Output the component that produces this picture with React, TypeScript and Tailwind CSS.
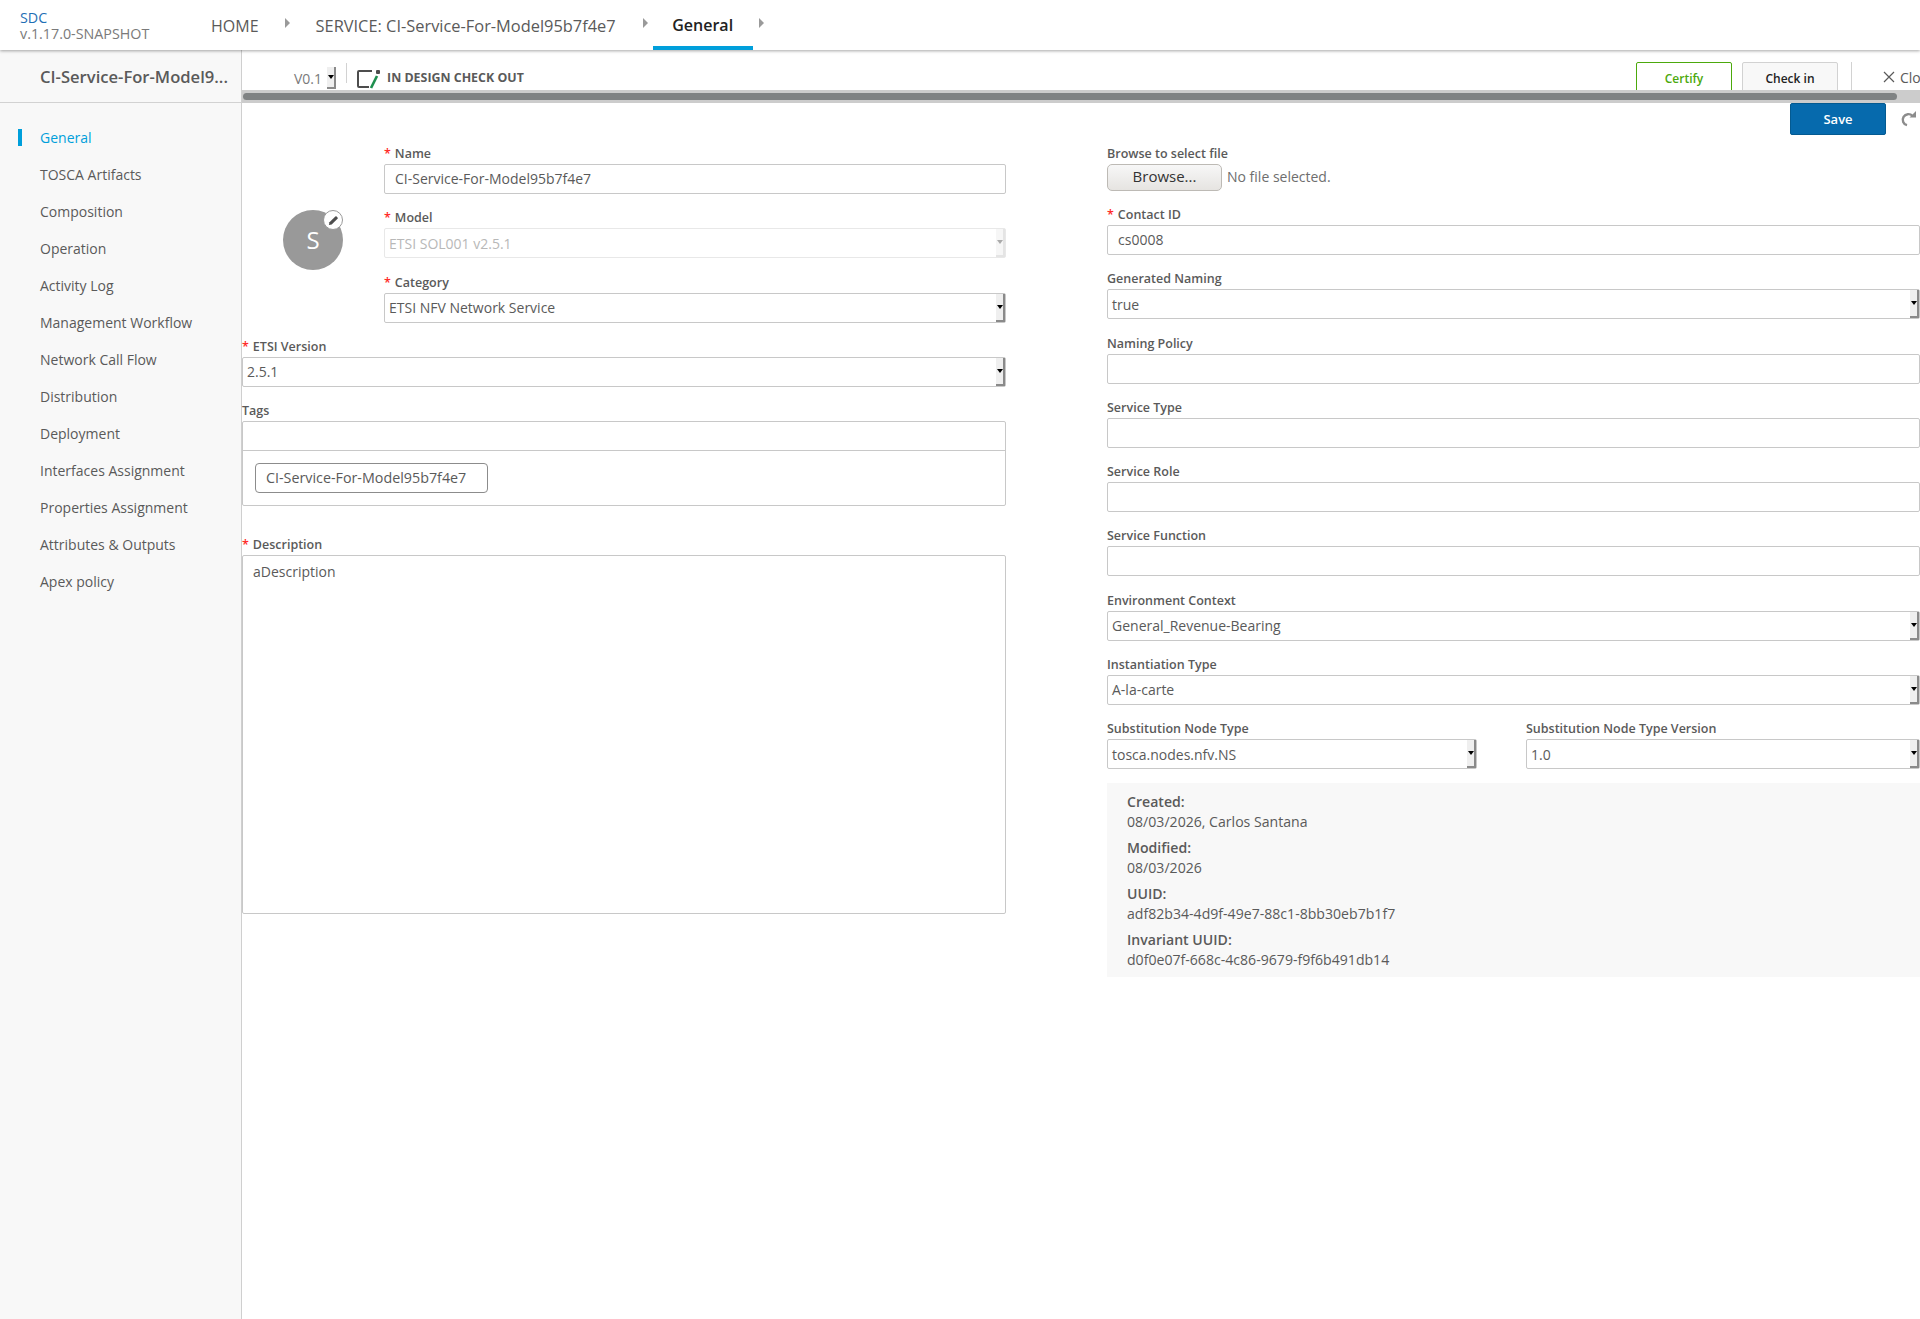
const navItems = [
  "General",
  "TOSCA Artifacts",
  "Composition",
  "Operation",
  "Activity Log",
  "Management Workflow",
  "Network Call Flow",
  "Distribution",
  "Deployment",
  "Interfaces Assignment",
  "Properties Assignment",
  "Attributes & Outputs",
  "Apex policy",
];

const rightFields = [
  { label: "Contact ID", value: "cs0008", required: true },
  { label: "Generated Naming", value: "true", select: true },
  { label: "Naming Policy", value: "" },
  { label: "Service Type", value: "" },
  { label: "Service Role", value: "" },
  { label: "Service Function", value: "" },
  { label: "Environment Context", value: "General_Revenue-Bearing", select: true },
  { label: "Instantiation Type", value: "A-la-carte", select: true },
];

const infoRows = [
  { label: "Created:", value: "08/03/2026, Carlos Santana" },
  { label: "Modified:", value: "08/03/2026" },
  { label: "UUID:", value: "adf82b34-4d9f-49e7-88c1-8bb30eb7b1f7" },
  { label: "Invariant UUID:", value: "d0f0e07f-668c-4c86-9679-f9f6b491db14" },
];

function Chevron() {
  return <span className="mb-[4px] h-0 w-0 border-y-[5px] border-l-[5px] border-y-transparent border-l-[#9a9a9a]" />;
}

function SelectArrow({ disabled }: { disabled?: boolean }) {
  return (
    <span
      className={`flex w-[9px] shrink-0 items-center justify-center self-stretch border-b-2 border-r-2 ${
        disabled ? "border-[#e4e4e4] bg-[#f6f6f6]" : "border-[#8a8a8a] bg-[#efefef]"
      }`}
    >
      <span
        className={`h-0 w-0 border-x-[3px] border-t-[4px] border-x-transparent ${
          disabled ? "border-t-[#aaaaaa]" : "border-t-black"
        }`}
      />
    </span>
  );
}

function Label({ text, required }: { text: string; required?: boolean }) {
  return (
    <div className="flex h-[20px] items-center pt-[1px] text-[12.5px] font-semibold text-[#5a5a5a]">
      {required && <span className="mr-[4px] text-[#ff2a2a]">*</span>}
      {text}
    </div>
  );
}

function Field({
  label,
  value,
  required,
  select,
  disabled,
}: {
  label: string;
  value: string;
  required?: boolean;
  select?: boolean;
  disabled?: boolean;
}) {
  return (
    <div className="h-[64.25px]">
      <Label text={label} required={required} />
      <div
        className={`flex h-[30px] items-center rounded-[2px] border text-[14px] ${
          disabled ? "border-[#e8e8e8] text-[#b8b8b8]" : "border-[#c8c8c8] text-[#5a5a5a]"
        } ${select ? "pl-[4px]" : "pb-[1px] pl-[10px]"}`}
      >
        <span className="flex-1">{value}</span>
        {select && <SelectArrow disabled={disabled} />}
      </div>
    </div>
  );
}

function Sidebar() {
  return (
    <aside className="flex w-[242px] shrink-0 flex-col border-r border-[#cfcfcf] bg-[#f8f8f8]">
      <div className="flex h-[53px] shrink-0 items-center border-b border-[#d2d2d2] pl-[40px] pt-[2px] text-[16.6px] font-semibold text-[#5a5a5a]">
        CI-Service-For-Model9...
      </div>
      <nav className="flex flex-col pt-[16px]">
        {navItems.map((item, i) => (
          <div key={item} className="flex h-[37px] items-center text-[14px] text-[#5a5a5a]">
            <span className={`ml-[18px] h-[17px] w-[4px] ${i === 0 ? "bg-[#009fdb]" : ""}`} />
            <span className={`ml-[18px] ${i === 0 ? "text-[#009fdb]" : ""}`}>{item}</span>
          </div>
        ))}
      </nav>
    </aside>
  );
}

function Toolbar() {
  return (
    <div className="flex h-[40px] shrink-0 items-end overflow-hidden">
      <div className="mb-[-1px] ml-[52px] flex h-[26px] items-center text-[14px] text-[#7a7a7a]">
        V0.1
        <span className="ml-[5px] flex h-[22px]">
          <SelectArrow />
        </span>
      </div>
      <span className="mb-[7px] ml-[10px] h-[20px] w-px bg-[#d2d2d2]" />
      <svg className="mb-[1px] ml-[10px]" width="24" height="20" viewBox="0 0 24 20" fill="none">
        <path d="M15 2H2a1 1 0 0 0-1 1v14a1 1 0 0 0 1 1h10" stroke="#4d4d4d" strokeWidth="2" />
        <path d="M14 19L20 7" stroke="#1f8f4f" strokeWidth="2.6" />
        <rect x="19" y="1" width="4" height="4" rx="1" fill="#4d4d4d" />
      </svg>
      <span className="mb-[2px] ml-[6px] text-[12.4px] font-bold text-[#5a5a5a]">IN DESIGN CHECK OUT</span>
      <div className="ml-auto flex h-[28px] items-start">
        <span className="flex h-[30px] w-[96px] items-center justify-center rounded-[2px] border border-[#4ca90c] pt-[3px] text-[12px] font-semibold text-[#4ca90c]">
          Certify
        </span>
        <span className="ml-[10px] flex h-[30px] w-[96px] items-center justify-center rounded-[2px] border border-[#d2d2d2] bg-[#f8f8f8] pt-[3px] text-[12px] font-semibold text-[#222222]">
          Check in
        </span>
        <span className="ml-[13px] h-[30px] w-px bg-[#d2d2d2]" />
        <div className="ml-[31px] flex w-[37px] items-center overflow-hidden pt-[5px] text-[14px] text-[#5a5a5a]">
          <svg className="mb-[2px] shrink-0" width="12" height="12" viewBox="0 0 12 12" stroke="#5a5a5a" strokeWidth="1.2">
            <path d="M1 1l10 10M11 1L1 11" />
          </svg>
          <span className="ml-[5px]">Close</span>
        </div>
      </div>
    </div>
  );
}

function LeftColumn() {
  return (
    <div className="w-[764px] shrink-0">
      <div className="flex items-center">
        <div className="w-[142px] shrink-0 pl-[41px]">
          <div className="relative flex h-[60px] w-[60px] items-center justify-center rounded-full bg-[#999999] text-[24px] text-white">
            S
            <span className="absolute right-0 top-0 flex h-[20px] w-[20px] items-center justify-center rounded-full border border-[#999999] bg-white">
              <svg width="11" height="11" viewBox="0 0 12 12" fill="#4d4d4d">
                <path d="M1 11l.6-3L8 1.6a1 1 0 0 1 1.4 0l1 1a1 1 0 0 1 0 1.4L4 10.4z" />
              </svg>
            </span>
          </div>
        </div>
        <div className="flex-1">
          <Field label="Name" value="CI-Service-For-Model95b7f4e7" required />
          <Field label="Model" value="ETSI SOL001 v2.5.1" required select disabled />
          <Field label="Category" value="ETSI NFV Network Service" required select />
        </div>
      </div>
      <Field label="ETSI Version" value="2.5.1" required select />
      <Label text="Tags" />
      <div className="rounded-[2px] border border-[#c8c8c8]">
        <div className="h-[29px] border-b border-[#c8c8c8]" />
        <div className="flex h-[54px] items-center pl-[12px]">
          <span className="flex h-[30px] w-[233px] items-center rounded-[4px] border border-[#8c8c8c] pl-[10px] text-[14.3px] font-medium text-[#5a5a5a]">
            CI-Service-For-Model95b7f4e7
          </span>
        </div>
      </div>
      <div className="mt-[29px]">
        <Label text="Description" required />
        <div className="h-[359px] rounded-[2px] border border-[#c8c8c8] px-[10px] py-[5px] text-[14px] text-[#5a5a5a]">
          aDescription
        </div>
      </div>
    </div>
  );
}

function RightColumn() {
  return (
    <div className="ml-[101px] w-[813px] shrink-0">
      <Label text="Browse to select file" />
      <div className="mb-[15px] flex h-[26px] items-center">
        <span className="flex h-[27px] w-[115px] items-center justify-center rounded-[5px] border border-[#bdbab5] bg-gradient-to-b from-[#f7f7f7] to-[#e6e4e1] pb-[2px] text-[15px] text-[#333333]">
          Browse...
        </span>
        <span className="ml-[5px] pb-[2px] text-[14px] text-[#6e6e6e]">No file selected.</span>
      </div>
      {rightFields.map((f) => (
        <Field key={f.label} {...f} />
      ))}
      <div className="flex">
        <div className="w-[370px]">
          <Field label="Substitution Node Type" value="tosca.nodes.nfv.NS" select />
        </div>
        <div className="ml-[49px] flex-1">
          <Field label="Substitution Node Type Version" value="1.0" select />
        </div>
      </div>
      <div className="mt-[-19px] h-[194px] translate-y-[19px] bg-[#f8f8f8] pl-[20px] pt-[9px] text-[14.1px] text-[#5a5a5a]">
        {infoRows.map((r) => (
          <div key={r.label} className="h-[46px]">
            <div className="h-[20px] font-semibold leading-[20px]">{r.label}</div>
            <div className="leading-[20px]">{r.value}</div>
          </div>
        ))}
      </div>
    </div>
  );
}

export default function App() {
  return (
    <div className="flex h-[1319px] w-[1920px] flex-col overflow-hidden bg-white font-['Open_Sans',sans-serif]">
      <header className="relative z-10 flex h-[50px] shrink-0 items-center bg-white shadow-[0_1px_3px_rgba(0,0,0,0.35)]">
        <div className="ml-[20px] w-[191px] pt-[2px] text-[14.3px] leading-[16px]">
          <div className="text-[#1f6fb5]">SDC</div>
          <div className="text-[#7a7a7a]">v.1.17.0-SNAPSHOT</div>
        </div>
        <span className="pt-[2px] text-[16px] text-[#5a5a5a]">HOME</span>
        <span className="ml-[26px] flex"><Chevron /></span>
        <span className="ml-[26px] pt-[2px] text-[16.4px] text-[#5a5a5a]">SERVICE: CI-Service-For-Model95b7f4e7</span>
        <span className="ml-[27px] flex"><Chevron /></span>
        <div className="ml-[5px] flex h-[50px] w-[100px] items-center justify-center border-b-[4px] border-[#009fdb] pt-[4px] text-[16px] font-semibold text-[#222222]">
          General
        </div>
        <span className="ml-[6px] flex"><Chevron /></span>
      </header>
      <div className="flex min-h-0 flex-1">
        <Sidebar />
        <main className="flex min-w-0 flex-1 flex-col">
          <Toolbar />
          <div className="flex h-[13px] shrink-0 items-center bg-[#cccccc] pl-[1px] pr-[23px]">
            <div className="h-[7px] w-full rounded-full bg-[#7f8283]" />
          </div>
          <div className="flex h-[32px] shrink-0 items-start justify-end">
            <span className="flex h-[32px] w-[96px] items-center justify-center rounded-[2px] border border-[#045a91] bg-[#066aad] pt-[1px] text-[13px] font-semibold text-white">
              Save
            </span>
            <svg className="ml-[14px] mr-[3px] mt-[8px]" width="17" height="16" viewBox="0 0 17 16" fill="none">
              <path d="M12.5 5A5.6 5.6 0 1 0 7 14.2" stroke="#8c8c8c" strokeWidth="2.4" />
              <path d="M9.5 6.5H16V0z" fill="#8c8c8c" />
            </svg>
          </div>
          <div className="flex pt-[9px]">
            <LeftColumn />
            <RightColumn />
          </div>
        </main>
      </div>
    </div>
  );
}
